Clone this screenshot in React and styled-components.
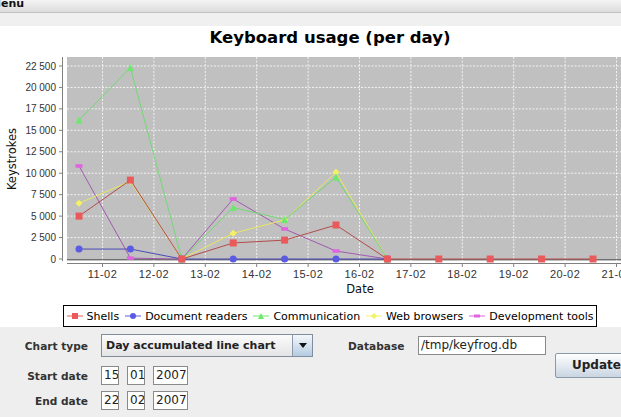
import React from 'react'
import styled, { createGlobalStyle } from 'styled-components'

const GlobalStyle = createGlobalStyle`
  html, body {
    margin: 0;
    padding: 0;
    background: #eeeeee;
  }
  body {
    font-family: "DejaVu Sans", Verdana, sans-serif;
  }
`

const Window = styled.div`
  width: 621px;
  height: 417px;
  overflow: hidden;
  display: flex;
  flex-direction: column;
  background: #eeeeee;
`

const MenuBar = styled.div`
  flex: none;
  height: 12px;
  background: linear-gradient(#f4f4f4, #dcdcdc);
  border-bottom: 1px solid #c2c2c2;
  overflow: hidden;
`

const MenuItem = styled.span`
  display: block;
  margin: -3px 0 0 -10px;
  font: bold 11px "DejaVu Sans", sans-serif;
  line-height: 13px;
  color: #111;
`

const Strip = styled.div`
  flex: none;
  height: 13px;
  background: #f0f0f0;
`

const ChartPanel = styled.div`
  flex: none;
  width: 660px;
  height: 301px;
  background: #ffffff;
  display: flex;
  flex-direction: column;
  align-items: center;
`

const Title = styled.div`
  margin-top: 2px;
  height: 20px;
  font: bold 16.5px "DejaVu Sans", sans-serif;
  line-height: 20px;
  color: #000;
`

const Legend = styled.div`
  margin-top: 5px;
  height: 20px;
  display: inline-flex;
  align-items: center;
  gap: 6px;
  padding: 0 3px;
  border: 1px solid #000;
  font: 11px "DejaVu Sans", sans-serif;
  color: #000;
`

const LegendItem = styled.div`
  display: flex;
  align-items: center;
  gap: 4px;
  white-space: nowrap;
`

const Controls = styled.div`
  flex: 1;
  display: flex;
  align-items: flex-start;
  padding-top: 7px;
`

const Form = styled.div`
  display: flex;
  flex-direction: column;
`

const FormRow = styled.div`
  display: flex;
  align-items: center;
  height: ${({ h }) => h}px;
  margin-top: ${({ mt }) => mt || 0}px;
`

const Label = styled.span`
  width: ${({ w }) => w}px;
  margin-right: 13px;
  text-align: ${({ align }) => align || 'right'};
  font: bold 10.6px "DejaVu Sans", sans-serif;
  color: #333;
  white-space: nowrap;
`

const Combo = styled.div`
  width: 212px;
  height: 23px;
  box-sizing: border-box;
  display: flex;
  border: 1px solid #7f8d9c;
  background: linear-gradient(#fbfbfb, #e4e4e4);
`

const ComboText = styled.span`
  flex: 1;
  padding-left: 4px;
  font: bold 11px "DejaVu Sans", sans-serif;
  line-height: 21px;
  color: #222;
  white-space: nowrap;
`

const ComboArrow = styled.div`
  width: 19px;
  border-left: 1px solid #8c9aaa;
  background: linear-gradient(#f4f7fa, #b4cbe2);
  display: flex;
  align-items: center;
  justify-content: center;
  &::after {
    content: '';
    border-left: 4px solid transparent;
    border-right: 4px solid transparent;
    border-top: 5px solid #111;
  }
`

const Field = styled.div`
  width: ${({ w }) => w}px;
  height: 19px;
  box-sizing: border-box;
  margin-right: ${({ mr }) => mr || 0}px;
  padding-left: 2px;
  border: 1px solid #8a8a8a;
  background: #ffffff;
  font: 12px "DejaVu Sans", sans-serif;
  line-height: 17px;
  color: #222;
  white-space: nowrap;
  overflow: hidden;
`

const DbGroup = styled.div`
  display: flex;
  align-items: center;
  height: 23px;
  margin-left: 35px;
`

const UpdateButton = styled.div`
  flex: none;
  margin: 19px 0 0 9px;
  height: 25px;
  box-sizing: border-box;
  padding: 0 16px;
  border: 1px solid #8a99aa;
  border-radius: 2px;
  background: linear-gradient(#ffffff, #c9d5e2);
  font: bold 12px "DejaVu Sans", sans-serif;
  line-height: 23px;
  color: #222;
  white-space: nowrap;
`

const X0 = 79
const DX = 51.4
const yOf = (v) => 259 - (v * 193) / 22500
const xOf = (i) => X0 + DX * i

const series = [
  { name: 'Shells', line: '#b44c4c', fill: '#ea5a5a', shape: 'square', data: [5000, 9200, 0, 1870, 2200, 3960, 0, 0, 0, 0, 0] },
  { name: 'Document readers', line: '#4a4ab8', fill: '#5a5ae2', shape: 'circle', data: [1160, 1160, 0, 0, 0, 0, 0] },
  { name: 'Communication', line: '#72d872', fill: '#6ce86c', shape: 'triangle', data: [16200, 22300, 0, 6000, 4600, 9550, 0] },
  { name: 'Web browsers', line: '#e8e860', fill: '#f2f262', shape: 'diamond', data: [6500, 9050, 0, 3000, 4550, 10100, 0] },
  { name: 'Development tools', line: '#a05ab0', fill: '#e262e2', shape: 'bar', data: [10850, 100, 0, 7000, 3500, 930, 0] },
]

const yTicks = [0, 2500, 5000, 7500, 10000, 12500, 15000, 17500, 20000, 22500]
const dates = ['11-02', '12-02', '13-02', '14-02', '15-02', '16-02', '17-02', '18-02', '19-02', '20-02', '21-02']

const fmt = (v) => (v >= 1000 ? `${Math.floor(v / 1000)} ${String(v % 1000).padStart(3, '0')}` : String(v))

function Marker({ shape, x, y, fill, s = 3.5 }) {
  if (shape === 'square') return <rect x={x - s} y={y - s} width={s * 2} height={s * 2} fill={fill} />
  if (shape === 'circle') return <circle cx={x} cy={y} r={s} fill={fill} />
  if (shape === 'triangle') return <polygon points={`${x},${y - s} ${x + s},${y + s} ${x - s},${y + s}`} fill={fill} />
  if (shape === 'diamond') return <polygon points={`${x},${y - s} ${x + s},${y} ${x},${y + s} ${x - s},${y}`} fill={fill} />
  return <rect x={x - s} y={y - s / 2} width={s * 2} height={s} fill={fill} />
}

function LegendIcon({ s }) {
  return (
    <svg width="16" height="8" viewBox="0 0 16 8">
      <line x1="0" y1="4" x2="16" y2="4" stroke={s.fill} strokeWidth="1" />
      <Marker shape={s.shape} x={8} y={4} fill={s.fill} s={3} />
    </svg>
  )
}

function Chart() {
  const order = [...series].reverse()
  return (
    <svg width="660" height="252" viewBox="0 48 660 252">
      <rect x="67" y="57" width="586" height="204" fill="#c0c0c0" />
      {yTicks.slice(1).map((v) => (
        <line key={v} x1="67" x2="653" y1={yOf(v)} y2={yOf(v)} stroke="#f2f2f2" strokeDasharray="2 1.5" />
      ))}
      {dates.map((d, k) => (
        <line key={d} x1={102.5 + DX * k} x2={102.5 + DX * k} y1="57" y2="261" stroke="#f2f2f2" strokeDasharray="2 1.5" />
      ))}
      <line x1="67" x2="653" y1="259.5" y2="259.5" stroke="#6e6e6e" />
      {order.map((s) => (
        <g key={s.name}>
          <polyline
            points={s.data.map((v, i) => `${xOf(i)},${yOf(v)}`).join(' ')}
            fill="none"
            stroke={s.line}
            strokeWidth="1"
          />
          {s.data.map((v, i) => (
            <Marker key={i} shape={s.shape} x={xOf(i)} y={yOf(v)} fill={s.fill} />
          ))}
        </g>
      ))}
      <line x1="62.5" x2="62.5" y1="57" y2="261" stroke="#808080" />
      {yTicks.map((v) => (
        <g key={v}>
          <line x1="59" x2="62.5" y1={yOf(v)} y2={yOf(v)} stroke="#808080" />
          <text x="56" y={yOf(v)} dy="3.6" textAnchor="end" fontFamily="Liberation Sans, Arial, sans-serif" fontSize="10" fill="#333">
            {fmt(v)}
          </text>
        </g>
      ))}
      <line x1="67" x2="653" y1="263.5" y2="263.5" stroke="#808080" />
      {dates.map((d, k) => (
        <g key={d}>
          <line x1={102.5 + DX * k} x2={102.5 + DX * k} y1="263.5" y2="267" stroke="#808080" />
          <text x={102.5 + DX * k} y="278" textAnchor="middle" fontFamily="Liberation Sans, Arial, sans-serif" fontSize="11" letterSpacing="0.4" fill="#333">
            {d}
          </text>
        </g>
      ))}
      <text x="360" y="293" textAnchor="middle" fontFamily="DejaVu Sans, sans-serif" fontSize="11.5" fill="#111">
        Date
      </text>
      <text x="0" y="0" transform="translate(16 159) rotate(-90)" textAnchor="middle" fontFamily="DejaVu Sans, sans-serif" fontSize="11.5" fill="#111">
        Keystrokes
      </text>
    </svg>
  )
}

export default function App() {
  return (
    <Window>
      <GlobalStyle />
      <MenuBar>
        <MenuItem>Menu</MenuItem>
      </MenuBar>
      <Strip />
      <ChartPanel>
        <Title>Keyboard usage (per day)</Title>
        <Chart />
        <Legend>
          {series.map((s) => (
            <LegendItem key={s.name}>
              <LegendIcon s={s} />
              {s.name}
            </LegendItem>
          ))}
        </Legend>
      </ChartPanel>
      <Controls>
        <Form>
          <FormRow h={23}>
            <Label w={88}>Chart type</Label>
            <Combo>
              <ComboText>Day accumulated line chart</ComboText>
              <ComboArrow />
            </Combo>
          </FormRow>
          <FormRow h={19} mt={9}>
            <Label w={88}>Start date</Label>
            <Field w={18} mr={8}>15</Field>
            <Field w={18} mr={8}>01</Field>
            <Field w={35}>2007</Field>
          </FormRow>
          <FormRow h={19} mt={6}>
            <Label w={88}>End date</Label>
            <Field w={18} mr={8}>22</Field>
            <Field w={18} mr={8}>02</Field>
            <Field w={35}>2007</Field>
          </FormRow>
        </Form>
        <DbGroup>
          <Label w={57} align="left">Database</Label>
          <Field w={128}>/tmp/keyfrog.db</Field>
        </DbGroup>
        <UpdateButton>Update chart</UpdateButton>
      </Controls>
    </Window>
  )
}
